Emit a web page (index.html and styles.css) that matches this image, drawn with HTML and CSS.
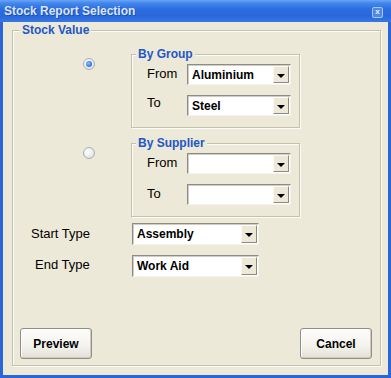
FILE: index.html
```html
<!DOCTYPE html>
<html lang="en">
<head>
    <meta charset="UTF-8">
    <meta name="viewport" content="width=device-width, initial-scale=1.0">
    <title>Stock Report Selection</title>
    <link rel="stylesheet" href="styles.css">
</head>
<body>
    <div class="window">
        <div class="titlebar">
            <span class="title">Stock Report Selection</span>
            <span class="close-btn">x</span>
        </div>
        <div class="client">
            <div class="group outer">
                <span class="caption">Stock Value</span>

                <div class="option-row">
                    <div class="radio-cell"><span class="radio checked"></span></div>
                    <div class="group sub">
                        <span class="caption">By Group</span>
                        <div class="field-row">
                            <span class="field-label">From</span>
                            <div class="combo"><span class="combo-text">Aluminium</span><span class="drop"></span></div>
                        </div>
                        <div class="field-row">
                            <span class="field-label up">To</span>
                            <div class="combo"><span class="combo-text">Steel</span><span class="drop"></span></div>
                        </div>
                    </div>
                </div>

                <div class="option-row second">
                    <div class="radio-cell"><span class="radio"></span></div>
                    <div class="group sub">
                        <span class="caption">By Supplier</span>
                        <div class="field-row">
                            <span class="field-label">From</span>
                            <div class="combo"><span class="combo-text"></span><span class="drop"></span></div>
                        </div>
                        <div class="field-row">
                            <span class="field-label">To</span>
                            <div class="combo"><span class="combo-text"></span><span class="drop"></span></div>
                        </div>
                    </div>
                </div>

                <div class="type-row">
                    <span class="type-label">Start Type</span>
                    <div class="combo wide"><span class="combo-text">Assembly</span><span class="drop"></span></div>
                </div>
                <div class="type-row end">
                    <span class="type-label">End Type</span>
                    <div class="combo wide"><span class="combo-text">Work Aid</span><span class="drop"></span></div>
                </div>

                <div class="button-row">
                    <button class="btn">Preview</button>
                    <button class="btn">Cancel</button>
                </div>
            </div>
        </div>
    </div>
</body>
</html>
```

FILE: styles.css
```css
* {
    box-sizing: border-box;
}
body {
    margin: 0;
    font-family: 'Liberation Sans', Arial, sans-serif;
    background: #ece9d8;
}
.window {
    width: 391px;
    height: 378px;
    display: flex;
    flex-direction: column;
    background: #2b66d9;
}
.titlebar {
    height: 22px;
    display: flex;
    align-items: center;
    justify-content: space-between;
    padding: 0 8px 0 4px;
    background: linear-gradient(to bottom, #6aa6f4 0, #4488ee 3px, #2d6ddf 9px, #2968dc 16px, #3878e3 22px);
}
.title {
    color: #dbe6f8;
    font-size: 12px;
    font-weight: bold;
    text-shadow: 1px 1px 0 #1d4fb0;
}
.close-btn {
    width: 11px;
    height: 11px;
    margin-top: 2px;
    border: 1px solid #a9c6f2;
    border-radius: 2px;
    background: #4b8ae8;
    color: #e8f0fc;
    font-size: 8px;
    font-weight: bold;
    line-height: 8px;
    text-align: center;
}
.client {
    flex: 1;
    margin: 0 3px 3px;
    padding: 8px 7px 0 9px;
    background: #ece9d8;
}
.group {
    position: relative;
    border: 1px solid #c4c1b0;
    box-shadow: inset 1px 1px 0 #fbfbf8, 1px 1px 0 #fbfbf8;
}
.outer {
    height: 336px;
}
.caption {
    position: absolute;
    top: -8px;
    left: 7px;
    padding: 0 2px;
    background: #ece9d8;
    color: #2356c8;
    font-size: 12px;
    font-weight: bold;
    line-height: 14px;
}
.sub .caption {
    left: 4px;
}
.option-row {
    display: flex;
    margin-top: 23px;
}
.option-row.second {
    margin-top: 15px;
}
.radio-cell {
    width: 118px;
    padding: 4px 0 0 70px;
}
.radio {
    display: block;
    width: 12px;
    height: 12px;
    border-radius: 50%;
    border: 1px solid #a6b0bd;
    background: radial-gradient(circle at 40% 40%, #ffffff 0, #f2f2ee 40%, #d4d4cc 100%);
    position: relative;
}
.radio.checked::after {
    content: "";
    position: absolute;
    left: 2px;
    top: 2px;
    width: 6px;
    height: 6px;
    border-radius: 50%;
    background: radial-gradient(circle at 40% 40%, #8fc0ff 0, #3f7fe8 55%, #2058cc 100%);
}
.sub {
    width: 169px;
    height: 74px;
    padding: 9px 0 0 15px;
}
.field-row {
    display: flex;
    align-items: flex-start;
}
.field-row + .field-row {
    margin-top: 10px;
}
.field-label {
    width: 40px;
    padding-top: 2px;
    font-size: 13px;
    line-height: 15px;
    color: #000;
}
.field-label.up {
    padding-top: 0;
}
.combo {
    width: 104px;
    height: 21px;
    display: flex;
    align-items: stretch;
    background: #fff;
    border: 1px solid;
    border-color: #8d8b82 #f4f3ee #f4f3ee #8d8b82;
    box-shadow: inset 1px 1px 0 #d0cec4;
    padding: 1px 1px 1px 2px;
}
.combo.wide {
    width: 127px;
    height: 22px;
}
.combo-text {
    flex: 1;
    padding-left: 2px;
    font-size: 12px;
    font-weight: bold;
    line-height: 18px;
    color: #000;
}
.wide .combo-text {
    line-height: 19px;
}
.drop {
    width: 16px;
    position: relative;
    background: #ece9d8;
    border: 1px solid;
    border-color: #fbfbf8 #8d8b82 #8d8b82 #fbfbf8;
}
.drop::after {
    content: "";
    position: absolute;
    left: 3px;
    top: 50%;
    margin-top: -1px;
    border-left: 4px solid transparent;
    border-right: 4px solid transparent;
    border-top: 4px solid #000;
}
.type-row {
    display: flex;
    align-items: flex-start;
    margin-top: 6px;
    padding-left: 18px;
}
.type-row.end {
    margin-top: 10px;
    padding-left: 22px;
}
.type-label {
    width: 101px;
    padding-top: 3px;
    font-size: 13px;
    line-height: 15px;
    color: #000;
}
.end .type-label {
    width: 97px;
    padding-top: 2px;
}
.button-row {
    display: flex;
    justify-content: space-between;
    margin-top: 51px;
    padding: 0 8px 0 7px;
}
.btn {
    width: 72px;
    height: 31px;
    padding: 0;
    border: 1px solid #8f8d86;
    border-radius: 3px;
    background: linear-gradient(to bottom, #fdfdfb 0, #f3f2ec 60%, #e2e0d6 100%);
    box-shadow: inset -1px -1px 0 #cfccc0, inset 1px 1px 0 #ffffff;
    font-family: 'Liberation Sans', Arial, sans-serif;
    font-size: 12px;
    font-weight: bold;
    color: #000;
}
```
